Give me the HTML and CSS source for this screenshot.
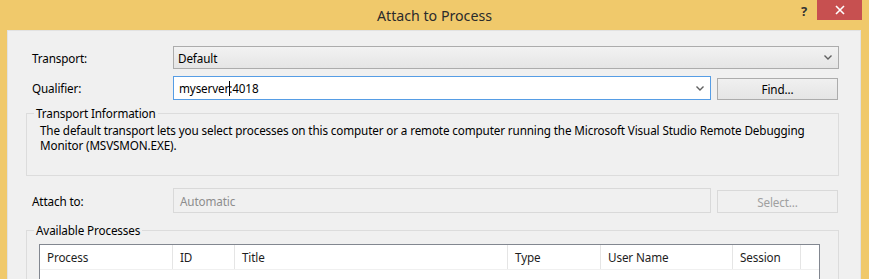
FILE: index.html
```html
<!DOCTYPE html>
<html>
<head>
<meta charset="utf-8">
<link rel="stylesheet" href="styles.css">
</head>
<body>
<div class="window">
  <div class="titlebar">
    <div class="title">Attach to Process</div>
    <div class="help">?</div>
    <div class="close"><svg width="10" height="10" viewBox="0 0 10 10"><path d="M1 1 L9 9 M9 1 L1 9" stroke="#fff" stroke-width="1.6"/></svg></div>
  </div>
  <div class="client">
    <div class="row row1">
      <div class="label">Transport:</div>
      <div class="combo">
        <span class="combo-text">Default</span>
        <svg class="chev" width="8" height="5" viewBox="0 0 8 5"><path d="M0.5 0.5 L4 4 L7.5 0.5" stroke="#606060" stroke-width="1.4" fill="none"/></svg>
      </div>
    </div>
    <div class="row row2">
      <div class="label">Qualifier:</div>
      <div class="input focused">
        <span class="input-text">myserver<span class="caret"></span>:4018</span>
        <svg class="chev" width="8" height="5" viewBox="0 0 8 5"><path d="M0.5 0.5 L4 4 L7.5 0.5" stroke="#606060" stroke-width="1.4" fill="none"/></svg>
      </div>
      <div class="button">Find...</div>
    </div>
    <fieldset class="group info">
      <legend>Transport Information</legend>
      <div class="info-text">The default transport lets you select processes on this computer or a remote computer running the Microsoft Visual Studio Remote Debugging<br>Monitor (MSVSMON.EXE).</div>
    </fieldset>
    <div class="row row3">
      <div class="label">Attach to:</div>
      <div class="input disabled"><span class="input-text">Automatic</span></div>
      <div class="button disabled">Select...</div>
    </div>
    <fieldset class="group procs">
      <legend>Available Processes</legend>
      <div class="table">
        <div class="thead">
          <div class="th c1">Process</div>
          <div class="th c2">ID</div>
          <div class="th c3">Title</div>
          <div class="th c4">Type</div>
          <div class="th c5">User Name</div>
          <div class="th c6">Session</div>
          <div class="th c7"></div>
        </div>
        <div class="tbody"></div>
      </div>
    </fieldset>
  </div>
</div>
</body>
</html>
```
FILE: styles.css
```css
html, body {
  margin: 0;
  padding: 0;
}
body {
  background: #f0c96b;
  font-family: "Noto Sans", "Open Sans", sans-serif;
  font-size: 11.7px;
  letter-spacing: -0.13px;
  color: #000;
  width: 869px;
  height: 279px;
  overflow: hidden;
}
.window {
  display: flex;
  flex-direction: column;
}
.titlebar {
  height: 30px;
  position: relative;
  display: flex;
  justify-content: center;
  align-items: center;
}
.title {
  font-size: 14.2px;
  letter-spacing: 0;
  color: #2b2b2b;
  margin-top: 1px;
}
.help {
  position: absolute;
  left: 801px;
  top: 2px;
  font-size: 13px;
  font-weight: bold;
  color: #333;
}
.close {
  position: absolute;
  left: 817px;
  top: 0;
  width: 45px;
  height: 20px;
  background: #c75050;
  display: flex;
  align-items: center;
  justify-content: center;
}
.client {
  margin-left: 7px;
  width: 854px;
  height: 260px;
  box-sizing: border-box;
  background: #f0f0f0;
  border: 1px solid #e2e2e2;
  padding: 15px 21px 0 18px;
}
.row {
  display: flex;
  align-items: center;
}
.label {
  width: 141px;
  padding-left: 6px;
  flex: none;
}
.row1 {
  height: 23px;
}
.row2 {
  margin-top: 7px;
  height: 24px;
}
.row3 {
  margin-top: 12px;
  height: 25px;
}
.combo {
  width: 666px;
  height: 23px;
  box-sizing: border-box;
  border: 1px solid #acacac;
  background: linear-gradient(#f2f2f2, #e5e5e5);
  display: flex;
  align-items: center;
  justify-content: space-between;
  padding: 0 6px 0 4px;
}
.input {
  width: 538px;
  height: 24px;
  box-sizing: border-box;
  border: 1px solid #acacac;
  background: #fff;
  display: flex;
  align-items: center;
  justify-content: space-between;
  padding: 0 6px 0 5px;
}
.input.focused {
  border-color: #569de5;
}
.input.disabled {
  height: 25px;
  border-color: #d9d9d9;
  background: #f0f0f0;
  color: #8d8d8d;
  padding-left: 6px;
}
.caret {
  display: inline-block;
  width: 1px;
  height: 15px;
  background: #000;
  vertical-align: -3px;
  margin-right: -1px;
}
.button {
  margin-left: 6px;
  width: 121px;
  height: 22px;
  box-sizing: border-box;
  border: 1px solid #acacac;
  background: linear-gradient(#f0f0f0, #e5e5e5);
  display: flex;
  align-items: center;
  justify-content: center;
  margin-top: 2px;
}
.button.disabled {
  height: 23px;
  border-color: #d9d9d9;
  background: #f0f0f0;
  color: #a0a0a0;
}
.group {
  margin: 0;
  padding: 0;
  border: 1px solid #dcdcdc;
  min-inline-size: 0;
}
.group legend {
  margin-left: 7px;
  padding: 0 2px;
  line-height: 15px;
}
.info {
  margin-top: 6px;
  width: 813px;
  box-sizing: border-box;
  height: 70px;
}
.info-text {
  padding: 2px 0 0 13px;
  line-height: 15px;
  white-space: nowrap;
}
.procs {
  margin-top: 10px;
  width: 813px;
  box-sizing: border-box;
  height: 60px;
}
.table {
  margin: 6px 0 0 12px;
  width: 781px;
  box-sizing: border-box;
  border: 1px solid #828790;
  border-bottom: none;
  background: #fff;
  height: 40px;
}
.thead {
  display: flex;
  height: 24px;
  border-bottom: 1px solid #f0f0f0;
}
.th {
  box-sizing: border-box;
  border-right: 1px solid #e5e5e5;
  padding-left: 7px;
  display: flex;
  align-items: center;
  color: #1e1e1e;
}
.c1 { width: 133px; }
.c2 { width: 62px; }
.c3 { width: 273px; }
.c4 { width: 93px; }
.c5 { width: 132px; }
.c6 { width: 68px; }
.c7 { flex: 1; border-right: none; }
```
